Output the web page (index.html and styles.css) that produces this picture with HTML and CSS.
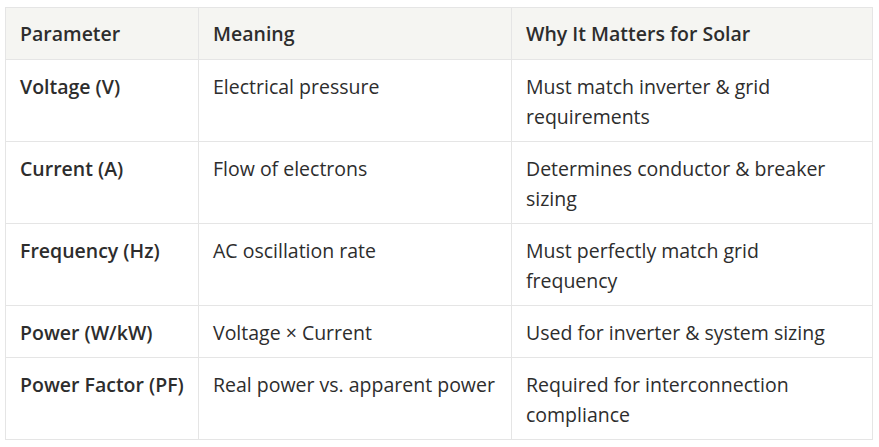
FILE: index.html
```html
<!DOCTYPE html>
<html lang="en">
<head>
<meta charset="utf-8">
<title>Solar Parameters</title>
<link rel="stylesheet" href="styles.css">
</head>
<body>
<table class="data-table">
  <colgroup>
    <col class="col-param">
    <col class="col-meaning">
    <col class="col-why">
  </colgroup>
  <thead>
    <tr>
      <th>Parameter</th>
      <th>Meaning</th>
      <th>Why It Matters for Solar</th>
    </tr>
  </thead>
  <tbody>
    <tr>
      <td class="param">Voltage (V)</td>
      <td>Electrical pressure</td>
      <td class="why">Must match inverter &amp; grid requirements</td>
    </tr>
    <tr>
      <td class="param">Current (A)</td>
      <td>Flow of electrons</td>
      <td class="why">Determines conductor &amp; breaker sizing</td>
    </tr>
    <tr>
      <td class="param">Frequency (Hz)</td>
      <td>AC oscillation rate</td>
      <td class="why">Must perfectly match grid frequency</td>
    </tr>
    <tr>
      <td class="param">Power (W/kW)</td>
      <td>Voltage × Current</td>
      <td class="why">Used for inverter &amp; system sizing</td>
    </tr>
    <tr>
      <td class="param">Power Factor (PF)</td>
      <td>Real power vs. apparent power</td>
      <td class="why">Required for interconnection compliance</td>
    </tr>
  </tbody>
</table>
</body>
</html>
```

FILE: styles.css
```css
html, body {
  margin: 0;
  background: #ffffff;
}

body {
  padding: 7px 0 0 5px;
  font-family: "Open Sans", "Noto Sans", sans-serif;
  font-size: 19.5px;
  color: #2d2d2d;
}

.data-table {
  border-collapse: collapse;
  table-layout: fixed;
  width: 867px;
}

.col-param { width: 193px; }
.col-meaning { width: 313px; }
.col-why { width: 361px; }

.data-table th,
.data-table td {
  border: 1px solid #e5e5e5;
  padding: 11px 6px 10px 14px;
  line-height: 30px;
  text-align: left;
  vertical-align: top;
}

.data-table td {
  padding-top: 12px;
  padding-bottom: 9px;
}

.data-table th {
  background: #f5f5f2;
  font-weight: 600;
}

.data-table td {
  font-weight: 400;
}

.data-table td.param {
  font-weight: 600;
}

.data-table td.why {
  padding-right: 22px;
}
```
